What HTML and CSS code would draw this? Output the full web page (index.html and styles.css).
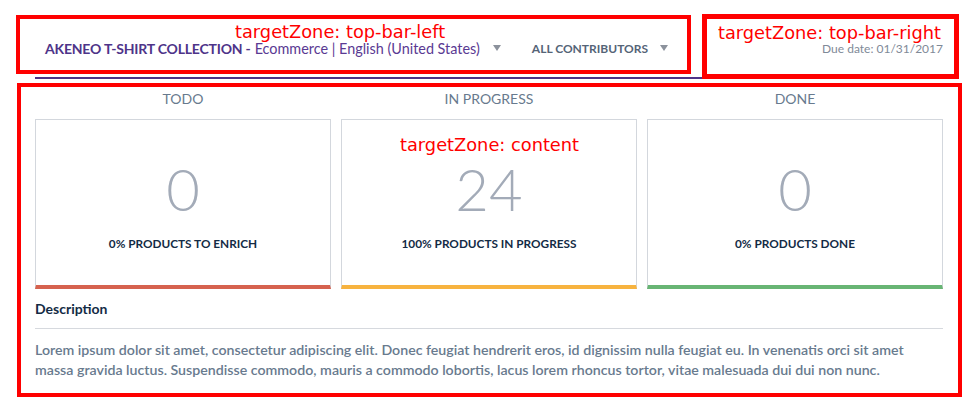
FILE: index.html
```html
<!DOCTYPE html>
<html>
<head>
<meta charset="utf-8">
<link rel="stylesheet" href="styles.css">
</head>
<body>
<div class="page">
  <header class="topbar">
    <div class="topbar-left">
      <div class="selector">
        <span class="title">AKENEO T-SHIRT COLLECTION -</span>
        <span class="scope">Ecommerce | English (United States)</span>
        <span class="caret"></span>
      </div>
      <div class="selector contributors">
        <span class="contrib">ALL CONTRIBUTORS</span>
        <span class="caret"></span>
      </div>
    </div>
    <div class="due">Due date: 01/31/2017</div>
  </header>
  <div class="rule"></div>
  <main class="content">
    <div class="columns">
      <div class="column">
        <div class="col-title">TODO</div>
        <div class="card card-todo">
          <div class="count">0</div>
          <div class="label">0% PRODUCTS TO ENRICH</div>
        </div>
      </div>
      <div class="column">
        <div class="col-title">IN PROGRESS</div>
        <div class="card card-progress">
          <div class="count">24</div>
          <div class="label">100% PRODUCTS IN PROGRESS</div>
        </div>
      </div>
      <div class="column">
        <div class="col-title">DONE</div>
        <div class="card card-done">
          <div class="count">0</div>
          <div class="label">0% PRODUCTS DONE</div>
        </div>
      </div>
    </div>
    <div class="description">
      <div class="desc-title">Description</div>
      <p class="desc-text">Lorem ipsum dolor sit amet, consectetur adipiscing elit. Donec feugiat hendrerit eros, id dignissim nulla feugiat eu. In venenatis orci sit amet massa gravida luctus. Suspendisse commodo, mauris a commodo lobortis, lacus lorem rhoncus tortor, vitae malesuada dui dui non nunc.</p>
    </div>
  </main>
</div>

<div class="zone zone-left"><span class="zone-label">targetZone: top-bar-left</span></div>
<div class="zone zone-right"><span class="zone-label">targetZone: top-bar-right</span></div>
<div class="zone zone-content"><span class="zone-label">targetZone: content</span></div>
</body>
</html>
```
FILE: styles.css
```css
* { box-sizing: border-box; }
html, body { margin: 0; padding: 0; background: #fff; }
body {
  font-family: Lato, "Open Sans", "Liberation Sans", sans-serif;
  width: 974px;
  height: 411px;
  overflow: hidden;
  position: relative;
}

.page {
  padding: 0 31px 0 35px;
}

.topbar {
  height: 77px;
  display: flex;
  justify-content: space-between;
  align-items: flex-start;
  padding-top: 38px;
}
.topbar-left {
  display: flex;
  align-items: center;
  padding-left: 10px;
  height: 20px;
}
.selector {
  display: flex;
  align-items: center;
  height: 20px;
}
.title {
  font-size: 14px;
  font-weight: 700;
  color: #4e3489;
  letter-spacing: -0.2px;
}
.scope {
  font-size: 14.4px;
  color: #5a3a93;
  margin-left: 4px;
}
.caret {
  width: 0;
  height: 0;
  border-left: 4.5px solid transparent;
  border-right: 4.5px solid transparent;
  border-top: 6px solid #8c929c;
  margin-left: 13px;
  margin-top: -1px;
}
.contributors { margin-left: 31px; }
.contrib {
  font-size: 12px;
  font-weight: 700;
  color: #556477;
}
.contributors .caret { margin-left: 12px; }
.due {
  font-size: 12px;
  color: #7f8a98;
  line-height: 20px;
  padding-top: 1px;
}

.rule {
  height: 2px;
  background: #4d3388;
}

.content { padding-top: 10px; }

.columns {
  display: grid;
  grid-template-columns: repeat(3, 1fr);
  column-gap: 10px;
}
.col-title {
  text-align: center;
  font-size: 14px;
  line-height: 20px;
  color: #687a8e;
  margin-bottom: 10px;
}
.card {
  height: 170px;
  border: 1px solid #d3d7dd;
  border-bottom: 4px solid #ccc;
  padding-top: 34px;
  text-align: center;
}
.card-todo { border-bottom-color: #d6624f; }
.card-progress { border-bottom-color: #f7b33f; }
.card-done { border-bottom-color: #68b574; }
.count {
  font-size: 58px;
  font-weight: 300;
  line-height: 70px;
  color: #a3abb8;
}
.label {
  margin-top: 13px;
  font-size: 11.8px;
  line-height: 14px;
  font-weight: 700;
  color: #132b45;
}

.description { margin-top: 10px; }
.desc-title {
  font-size: 14px;
  line-height: 20px;
  font-weight: 700;
  color: #132b45;
  padding-bottom: 9px;
  border-bottom: 1px solid #d6d9de;
}
.desc-text {
  margin: 11px 0 0;
  font-size: 14.2px;
  line-height: 20px;
  font-weight: 600;
  color: #687a8e;
}

/* annotation overlays */
.zone {
  position: absolute;
  border: 4px solid #ff0000;
}
.zone-label {
  position: absolute;
  font-family: "DejaVu Sans", sans-serif;
  font-size: 17.8px;
  line-height: 20px;
  color: #ff0000;
  white-space: nowrap;
}
.zone-left { left: 16px; top: 15px; width: 675px; height: 59px; }
.zone-left .zone-label { left: 215px; top: 3px; }
.zone-right { left: 702px; top: 14px; width: 257px; height: 65px; border-width: 5px; }
.zone-right .zone-label { right: 13px; top: 4px; }
.zone-content { left: 17px; top: 83px; width: 945px; height: 314px; }
.zone-content .zone-label { left: 379px; top: 48px; }
```
